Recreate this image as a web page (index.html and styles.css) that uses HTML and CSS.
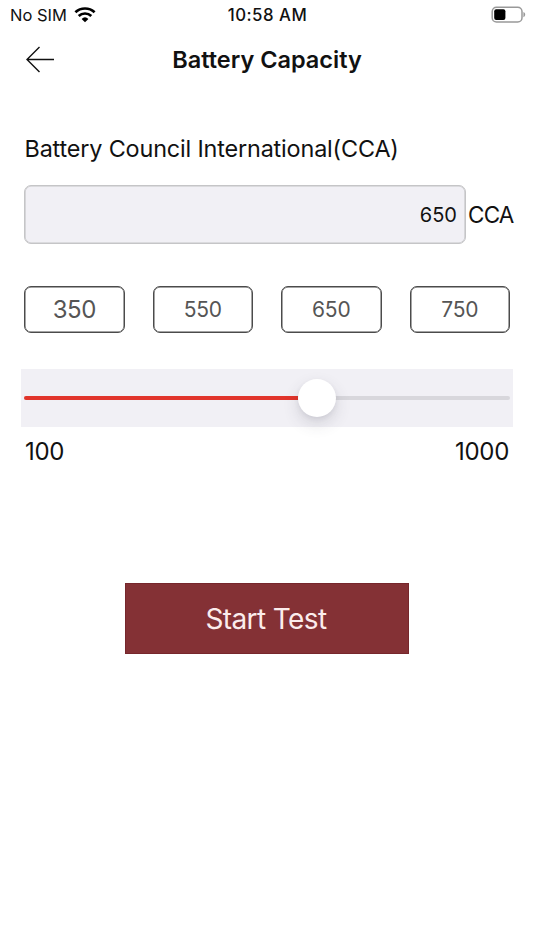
FILE: index.html
```html
<!DOCTYPE html>
<html lang="en">
<head>
<meta charset="utf-8">
<meta name="viewport" content="width=device-width, initial-scale=1">
<title>Battery Capacity</title>
<link rel="stylesheet" href="styles.css">
</head>
<body>
<div class="status">
  <div class="carrier"><span class="carrier-name">No SIM</span>
    <svg class="wifi" width="22" height="17" viewBox="0 0 22 17"><g fill="none" stroke="#000" stroke-width="2.7"><path d="M1.4 6.300a14 14 0 0 1 19.200 0"/><path d="M4.700 10a9.2 9.2 0 0 1 12.600 0"/></g><path d="M7.600 12.900a5 5 0 0 1 6.800 0L11 16.300z"/></svg>
  </div>
  <time class="clock">10:58 AM</time>
  <svg class="battery" width="35" height="18" viewBox="0 0 35 18"><rect x="1.2" y="1.2" width="29.8" height="14.8" rx="4.3" fill="none" stroke="#999" stroke-width="1.5"/><rect x="3.2" y="3.2" width="11.2" height="10.8" rx="2"/><path d="M32.4 6v5.2c1.3-.5 1.8-1.5 1.8-2.6s-.5-2.1-1.8-2.600z" fill="#999"/></svg>
</div>
<header class="nav">
  <svg class="back" width="30" height="28" viewBox="0 0 30 28" fill="none" stroke="#111" stroke-width="1.4"><path d="M14.500 1 2 13.500 14.500 26M2 13.500H29"/></svg>
  <h1 class="title"><span class="title-text">Battery Capacity</span></h1>
</header>
<main class="content">
  <div class="label"><span class="label-text">Battery Council International(CCA)</span></div>
  <div class="field">
    <div class="input"><span class="value">650</span></div>
    <span class="unit">CCA</span>
  </div>
  <div class="presets">
    <button class="preset preset-large">350</button>
    <button class="preset">550</button>
    <button class="preset">650</button>
    <button class="preset">750</button>
  </div>
  <div class="slider"><div class="track"><div class="fill"></div><div class="thumb"></div></div></div>
  <div class="range"><span class="min">100</span><span class="max">1000</span></div>
  <button class="start"><span class="start-text">Start Test</span></button>
</main>
</body>
</html>
```
FILE: styles.css
```css
* { box-sizing: border-box; }
body { margin: 0; height: 950px; overflow: hidden; background: #fff; color: #111; font-family: Inter, "Liberation Sans", sans-serif; }
button { font: inherit; padding: 0; cursor: pointer; }
svg { display: block; }
.status { display: grid; grid-template-columns: 1fr auto 1fr; height: 30px; padding: 0 8px 0 9px; align-items: center; }
.carrier { display: flex; align-items: center; gap: 7px; font-size: 16.5px; line-height: 30px; white-space: nowrap; }
.carrier-name { padding-left: 1px; }
.wifi { margin-top: -2px; }
.clock { font-size: 16.8px; font-weight: 500; line-height: 30px; letter-spacing: .5px; }
.battery { justify-self: end; margin-top: -1px; }
.nav { display: grid; grid-template-columns: 60px 1fr 60px; height: 60px; align-items: center; }
.back { margin-left: 25px; margin-top: -1px; }
.title { margin: 0; font-size: 23.5px; font-weight: 600; line-height: 60px; text-align: center; white-space: nowrap; }
.content { padding: 0 24px; }
.label { margin-top: 44px; padding-left: .5px; font-size: 23.4px; line-height: 30px; letter-spacing: -.16px; white-space: nowrap; }
.field { display: flex; margin: 21px -8px 0 0; height: 59px; align-items: center; gap: 2px; }
.input { display: flex; flex: none; width: 442px; height: 59px; padding: 0 8px; align-items: center; justify-content: flex-end; background: #f1f0f5; border: 1px solid #c5c5c7; box-shadow: inset 0 0 0 .6px #c5c5c7; border-radius: 7px; font-size: 20px; }
.unit { font-size: 22.5px; letter-spacing: -.8px; white-space: nowrap; }
.presets { display: flex; margin-top: 42px; justify-content: space-between; }
.preset { width: 100.5px; height: 47px; background: #fff; border: 1px solid #4b4b4b; box-shadow: inset 0 0 0 .5px #4b4b4b; border-radius: 7px; color: #555; font-size: 21px; letter-spacing: -.2px; }
.preset-large { font-size: 24px; letter-spacing: -.5px; }
.slider { display: flex; height: 58px; margin: 36px -3px 0; padding: 0 3px; align-items: center; background: #f1f0f5; }
.track { display: flex; width: 100%; height: 4px; align-items: center; background: #d8d7dc; border-radius: 2px; }
.fill { width: 274px; height: 4px; background: #e1342b; border-radius: 2px 0 0 2px; }
.thumb { flex: none; width: 38px; height: 38px; border-radius: 50%; background: #fff; box-shadow: 0 7px 16px rgba(60, 60, 80, .16), 0 2px 5px rgba(60, 60, 80, .08); }
.range { display: flex; margin-top: 10px; padding: 0 1px; justify-content: space-between; font-size: 24px; letter-spacing: -.3px; line-height: 30px; }
.start { display: block; width: 284px; height: 71px; margin: 116px auto 0; background: #843135; border: 1px solid #76272c; color: #fbecec; font-size: 28px; letter-spacing: -.6px; }
.start-text { margin-right: 2px; }
```
